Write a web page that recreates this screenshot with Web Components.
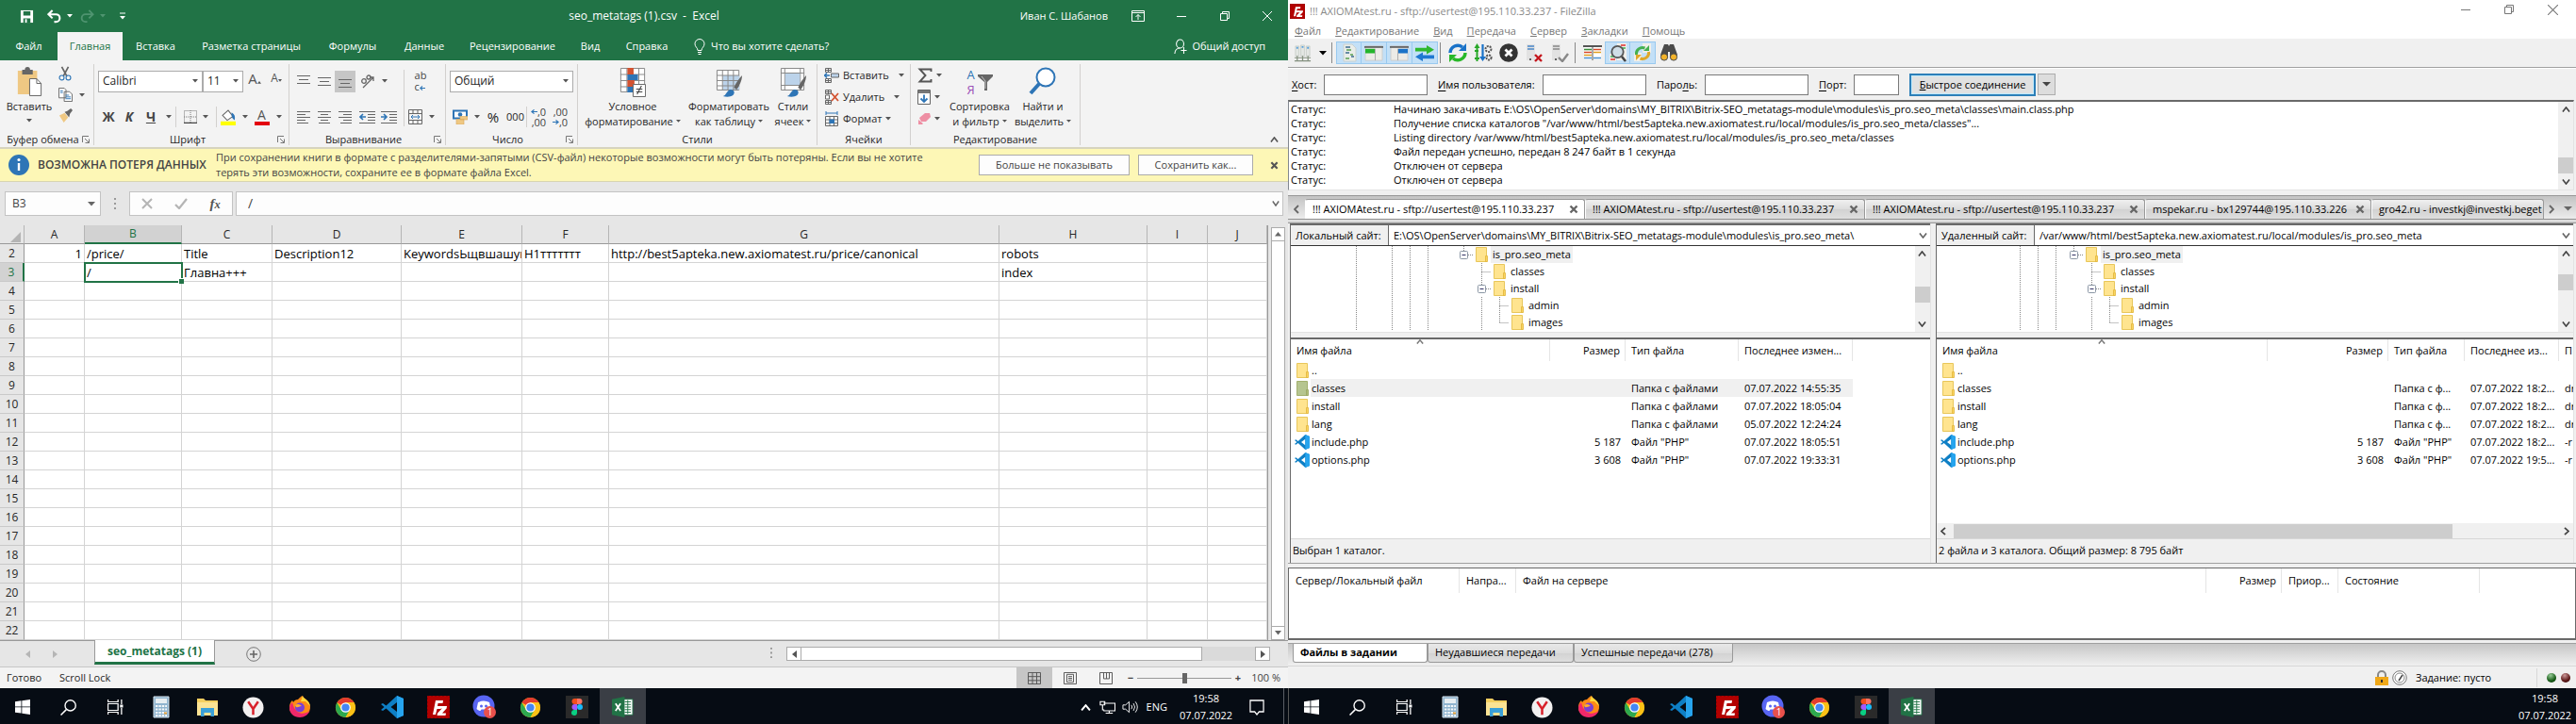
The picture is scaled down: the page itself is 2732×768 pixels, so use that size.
<!DOCTYPE html>
<html lang="ru">
<head>
<meta charset="utf-8">
<title>Рабочий стол</title>
<style>
html,body{margin:0;background:#060c14}
body{font-family:"Open Sans","Noto Sans",sans-serif;font-size:11px;line-height:16px;color:#000;font-variant-ligatures:none}
desk-top{--green:#217346}
</style>
</head>
<body>
<desk-top></desk-top>
<script>
const BASE = `
*{box-sizing:border-box}
:host{display:block}
button,input,select{font:inherit;color:inherit;margin:0;padding:0;border:0;background:none;border-radius:0;min-width:0;outline:0}
select{appearance:none}
button{display:inline-flex;align-items:center;justify-content:center;white-space:nowrap}
a{color:inherit;text-decoration:none}
table{border-collapse:separate;border-spacing:0;table-layout:fixed}
th{font-weight:400}
ui-icon{flex:none}
.grow{flex:1;min-width:0}
`;
function define(name, css, html) {
  customElements.define(name, class extends HTMLElement {
    constructor() {
      super();
      const body = typeof html === 'function' ? html(this) : html;
      this.attachShadow({mode: 'open'}).innerHTML = `<style>${BASE}${css}</style>${body}`;
    }
  });
}

/* ---------- icons ---------- */
const chromeArt = `<circle cx="12" cy="12" r="11" fill="#fbc116"/><path d="M12 12 2.5 6.5A11 11 0 0 1 21.5 6.5L12 6.5z" fill="#e33b2e"/><path d="M2.5 6.5A11 11 0 0 0 12 23l4.8-8.3L7.2 14.7z" fill="#2da94f"/><path d="M12 23A11 11 0 0 0 21.5 6.5H12l4.8 8.2z" fill="#fbc116"/><circle cx="12" cy="12" r="5.6" fill="#fff"/><circle cx="12" cy="12" r="4.3" fill="#4486f4"/>`;
const cells4 = `<path d="M1.5.5h6v4h-6zM1.5 11.5h6v4h-6zM4.5.5v4M4.5 11.5v4M1.5 2.5h6M1.5 13.5h6" fill="none" stroke="#666"/>`;
const ICONS = {
  save:['0 0 16 16','<path d="M1 1h14v14H1z" fill="#fff"/><path d="M4 2h8v5H4zM4 10h8v5H4z" fill="#217346"/><path d="M6 11h2v4H6z" fill="#fff"/>'],
  undo:['0 0 16 16','<path d="M2 5.5h8a4 4 0 0 1 0 8.500H8M6 1 1.500 5.500 6 10" fill="none" stroke="#fff" stroke-width="2.200"/>'],
  redo:['0 0 16 16','<path d="M14 5.500H6A4 4 0 0 0 6 14h2M10 1l4.500 4.500L10 10" fill="none" stroke="#4f9470" stroke-width="2"/>'],
  down:['0 0 8 5','<path d="M0 0h8L4 4.500z" fill="currentColor"/>'],
  up:['0 0 8 5','<path d="M0 4.500h8L4 0z" fill="currentColor"/>'],
  left:['0 0 5 8','<path d="M5 0v8L0 4z" fill="currentColor"/>'],
  right:['0 0 5 8','<path d="M0 0v8l5-4z" fill="currentColor"/>'],
  qat:['0 0 8 8','<path d="M1 1h6" stroke="#fff"/><path d="M1 4h6L4 7.500z" fill="#fff"/>'],
  chevU:['0 0 10 6','<path d="M1 5.500 5 1l4 4.500" fill="none" stroke="currentColor" stroke-width="1.800"/>'],
  chevD:['0 0 10 6','<path d="M1 .5 5 5 9 .5" fill="none" stroke="currentColor" stroke-width="1.800"/>'],
  chevL:['0 0 6 10','<path d="M5 1 1 5l4 4" fill="none" stroke="currentColor" stroke-width="1.800"/>'],
  chevR:['0 0 6 10','<path d="m1 1 4 4-4 4" fill="none" stroke="currentColor" stroke-width="1.800"/>'],
  ribbonOpt:['0 0 14 12','<path d="M.5.5h13v11H.5zM.5 2.500h13M7 10V4.500M4.500 7 7 4.500 9.500 7" fill="none" stroke="#fff"/>'],
  min:['0 0 10 10','<path d="M0 5.500h10" stroke="currentColor"/>'],
  restore:['0 0 10 10','<path d="M.5 2.500h7v7h-7zM2.500 2.500v-2h7v7h-2" fill="none" stroke="currentColor"/>'],
  close:['0 0 10 10','<path d="m0 0 10 10M10 0 0 10" stroke="currentColor"/>'],
  cross:['0 0 10 10','<path d="m1.500 1.500 7 7m0-7-7 7" stroke="currentColor" stroke-width="2.400"/>'],
  bulb:['0 0 12 17','<path d="M4 12.500c0-3-3-3.500-3-7a5 5 0 0 1 10 0c0 3.500-3 4-3 7zM4 14.500h4M4.500 16.500h3" fill="none" stroke="#fff"/>'],
  share:['0 0 16 17','<circle cx="7.500" cy="5.500" r="4.500" fill="none" stroke="#fff" stroke-width="1.200"/><path d="M1 16c.3-4 2-6 6.500-6M12 9v7M8.500 12.500h7" fill="none" stroke="#fff" stroke-width="1.200"/>'],
  paste:['0 0 30 32','<path d="M2 4h22v25H2z" fill="#efc883"/><path d="M7 3h3a3 3 0 0 1 6 0h3v5H7z" fill="#666"/><path d="M15.500 12.500h8l5 5v13h-13z" fill="#fff" stroke="#666"/><path d="M23.500 12.500v5h5" fill="none" stroke="#666"/>'],
  cut:['0 0 16 18','<path d="m4 1 6 11M12 1 6 12" stroke="#666" stroke-width="2"/><circle cx="4" cy="14" r="2.800" fill="none" stroke="#2e75b6" stroke-width="1.300"/><circle cx="12" cy="14" r="2.800" fill="none" stroke="#2e75b6" stroke-width="1.300"/>'],
  copy:['0 0 16 16','<path d="M.5.5h6l2 2v9h-8zM6.500 4.500h6l3 3v8h-9z" fill="#fff" stroke="#666"/><path d="M8 8.500h4M8 10.500h6M8 12.500h6M2 3.500h3M2 5.500h3" stroke="#2e75b6"/>'],
  brush:['0 0 16 16','<path d="m1 8 6-3 4 5-5 6z" fill="#efc883"/><path d="m7 4 3-1 4-3 2 2-3 4-1 4z" fill="#666"/>'],
  border:['0 0 14 14','<path d="M.5.5h13v13H.5zM7 0v14M0 7h14" fill="none" stroke="#777" stroke-dasharray="1 1"/><path d="M0 13.500h14" stroke="#444" stroke-width="1.500"/>'],
  fill:['0 0 16 16','<path d="m2 6 6-5 5 6-6 4z" fill="#fff" stroke="#666"/><path d="M12 4c2 1 3 3 2.500 6-2-1-2.500-3-2.500-6z" fill="#2e75b6" stroke="#2e75b6"/><path d="M0 12h16v4H0z" fill="#ff0"/>'],
  launch:['0 0 8 8','<path d="M7 .5H.5V7M3 3l4 4M7.500 3.500v4h-4" fill="none" stroke="#777"/>'],
  vtop:['0 0 14 16','<path d="M0 2.500h14M2 6.500h10M0 10.500h14" stroke="#666"/>'],
  vmid:['0 0 14 16','<path d="M0 4.500h14M2 8.500h10M0 12.500h14" stroke="#666"/>'],
  vbot:['0 0 14 16','<path d="M0 6.500h14M2 10.500h10M0 14.500h14" stroke="#666"/>'],
  orient:['0 0 16 16','<path d="m3 15 11-11M10 4h4v4" fill="none" stroke="#666" stroke-width="1.300"/><circle cx="4" cy="8" r="2.300" fill="none" stroke="#666" stroke-width="1.300"/><circle cx="9" cy="4" r="2" fill="none" stroke="#666" stroke-width="1.300"/>'],
  al:['0 0 14 14','<path d="M0 1.500h14M0 4.500h9M0 7.500h14M0 10.500h9M0 13.500h12" stroke="#666"/>'],
  ac:['0 0 14 14','<path d="M0 1.500h14M3 4.500h8M0 7.500h14M3 10.500h8M1 13.500h12" stroke="#666"/>'],
  ar:['0 0 14 14','<path d="M0 1.500h14M5 4.500h9M0 7.500h14M5 10.500h9M2 13.500h12" stroke="#666"/>'],
  outdent:['0 0 17 14','<path d="M0 1.500h17M9 4.500h8M9 7.500h8M9 10.500h8M0 13.500h17" stroke="#666"/><path d="M1 7h6M4 4 1 7l3 3" stroke="#2e75b6" stroke-width="1.600" fill="none"/>'],
  indent:['0 0 17 14','<path d="M0 1.500h17M9 4.500h8M9 7.500h8M9 10.500h8M0 13.500h17" stroke="#666"/><path d="M0 7h6M3 4l3 3-3 3" stroke="#2e75b6" stroke-width="1.600" fill="none"/>'],
  merge:['0 0 15 16','<path d="M.5.5h14v15H.5zM.5 4.500h14M.5 11.500h14M5 .5v4M10 .5v4M5 11.500v4M10 11.500v4" fill="none" stroke="#666"/><path d="M3 8h9M5 6 3 8l2 2M10 6l2 2-2 2" fill="none" stroke="#2e75b6"/>'],
  money:['0 0 16 16','<path d="M1 1.500h14v8H1z" fill="#fff" stroke="#2e75b6" stroke-width="2"/><circle cx="8" cy="5.500" r="2.300" fill="#2e75b6"/><path d="M8 7.500h8V11H8zM4 10.500h8V16H4z" fill="#efc883" stroke="#d9a95a" stroke-width=".6"/>'],
  arrL:['0 0 8 6','<path d="M1 3h7M4 .5 1 3l3 2.500" fill="none" stroke="#2e75b6" stroke-width="1.400"/>'],
  arrR:['0 0 8 6','<path d="M0 3h7M4 .5 7 3 4 5.500" fill="none" stroke="#2e75b6" stroke-width="1.400"/>'],
  cond:['0 0 30 32','<path d="M1.500 1.500h27v25h-27zM8.500 1v26M15 1v26M22 1v26M1 8h28M1 14.500h28M1 21h28" fill="#fff" stroke="#888"/><path d="M9 1h7v7H9zM9 14h8v7H9z" fill="#d35230"/><path d="M9 8h12v6H9zM9 21h6v6H9z" fill="#2e75b6"/><path d="M15.500 18.500h14v13h-14z" fill="#fff" stroke="#666"/><path d="M19 23.500h7M19 26.500h7M25 20l-5 9" stroke="#444" stroke-width="1.200"/>'],
  ftable:['0 0 30 32','<path d="M1.500 3.500h24v21h-24z" fill="#fff" stroke="#888"/><path d="M8 9h18v15H8z" fill="#bcd3ea"/><path d="M7.500 3v22M13.500 3v22M19.500 3v22M1 9h25M1 14.500h25M1 20h25" stroke="#888" fill="none"/><path d="M29 9c-3 3-7 8-9 13l3 2c3-4 6-10 6-15z" fill="#666"/><path d="M8 31c4-1 4-6 8-7 4 0 6 3 3 6-3 2-7 2-11 1z" fill="#2e75b6"/>'],
  cstyle:['0 0 30 32','<path d="M1.500 1.500h25v23h-25zM1 6.500h26M1 19.500h26M5.500 1v24M22.500 1v24" fill="#fff" stroke="#888"/><path d="M6 7h16v12H6z" fill="#bcd3ea"/><path d="M29 9c-3 3-7 8-9 13l3 2c3-4 6-10 6-15z" fill="#666"/><path d="M8 31c4-1 4-6 8-7 4 0 6 3 3 6-3 2-7 2-11 1z" fill="#2e75b6"/>'],
  cins:['0 0 16 16',cells4+'<path d="M7.500 6h8v4h-8z" fill="#bcd3ea" stroke="#666"/><path d="M0 8h6M3 5.500.5 8 3 10.500" stroke="#2e75b6" stroke-width="1.500" fill="none"/>'],
  cdel:['0 0 16 16',cells4+'<path d="M1.500 6h4v4h-4z" fill="#fff" stroke="#666"/><path d="m8 4 7 8m0-8-7 8" stroke="#d35230" stroke-width="1.800"/>'],
  cfmt:['0 0 16 16','<path d="M1.500 5.500h13v10h-13zM6 5v11M10.500 5v11M1 9h14M1 12.500h14" fill="#fff" stroke="#666"/><path d="M5.500 8.500h5.500V13H5.500z" fill="#2e75b6"/><path d="M2 0v4M14 0v4M2 2h12" stroke="#2e75b6"/>'],
  sum:['0 0 16 16','<path d="M14.500 4V1.500h-12L8.500 8l-6 6.500h12V12" fill="none" stroke="#555" stroke-width="1.900"/>'],
  fdown:['0 0 14 16','<path d="M.5.5h13v15H.5z" fill="#fff" stroke="#666"/><path d="M1 1h12v3H1z" fill="#777"/><path d="M7 5.500V13M3.500 9.500 7 13l3.500-3.500" fill="none" stroke="#2e75b6" stroke-width="1.800"/>'],
  eraser:['0 0 14 12','<path d="M8 0h5l1 4-5 5H4L2 5z" fill="#ee8fa4"/><path d="m1 7 5 4-1 1H1z" fill="#ee8fa4"/>'],
  funnel:['0 0 16 18','<path d="M0 1h16v2l-6 6v9H7V9L0 3z" fill="#666"/><path d="m4 3 4 5v8" fill="none" stroke="#ddd" stroke-width=".8"/>'],
  find:['0 0 30 32','<circle cx="18" cy="11" r="9.500" fill="#fff" stroke="#2e75b6" stroke-width="2"/><path d="m11 18-9 10" stroke="#2e75b6" stroke-width="4"/>'],
  info:['0 0 22 22','<circle cx="11" cy="11" r="11" fill="#2e75b6"/><circle cx="11" cy="5.500" r="1.600" fill="#fff"/><path d="M11 9v8" stroke="#fff" stroke-width="2.400"/>'],
  dots:['0 0 2 12','<path d="M0 1h2M0 6h2M0 11h2" stroke="#999" stroke-width="2"/>'],
  check:['0 0 14 12','<path d="m1 7 4 4 8-10" fill="none" stroke="#b5b5b5" stroke-width="2.200"/>'],
  xgray:['0 0 12 12','<path d="m1 1 10 10m0-10L1 11" stroke="#b5b5b5" stroke-width="2"/>'],
  corner:['0 0 12 12','<path d="M12 0v12H0z" fill="#b4b4b4"/>'],
  plusc:['0 0 16 16','<circle cx="8" cy="8" r="7.300" fill="none" stroke="#777"/><path d="M4 8h8M8 4v8" stroke="#666" stroke-width="1.600"/>'],
  vgrid:['0 0 14 14','<path d="M.5.5h13v13H.5zM5 0v14M9.500 0v14M0 5h14M0 9.500h14" fill="none" stroke="#555"/>'],
  vpage:['0 0 14 14','<path d="M.5.5h13v13H.5zM3.500 2.500h7v9h-7zM5 5h4M5 7h4M5 9h4" fill="none" stroke="#555"/>'],
  vbreak:['0 0 14 14','<path d="M.5.5h13v13H.5zM4.500.5v7h6v-7M7.500.5v7" fill="none" stroke="#555"/>'],
  /* file manager */
  fz:['0 0 24 24','<path d="M0 0h24v24H0z" fill="#b30000"/><path d="M0 0h24v24H0z" fill="none" stroke="#700" stroke-dasharray="2 2"/><path d="M6 20 9 5h8l-.5 3h-5l-.5 3h4l-.5 3h-4L9 20z" fill="#fff"/><path d="M13 11h8l-.4 2.500-4.600 5h4l-.5 2.500h-9l.5-2.500 4.700-5h-3.200z" fill="#fff"/>'],
  sites:['0 0 20 20','<path d="M2 2h4v11H2zM8 1h4v12H8zM14 2h4v11h-4z" fill="#e4e7e4" stroke="#b5bdb5" stroke-width=".6"/><path d="M3 4h2M9 3h2M15 4h2" stroke="#58a0dc" stroke-width="2"/><path d="M1 15h18M4 13v5M10 13v5M16 13v5M1 18.500h18" stroke="#84907f" stroke-width="1.300"/>'],
  log:['0 0 20 20','<path d="M4 1h9l4 4v14H4z" fill="#e9ede9" stroke="#c9d0d0"/><path d="M6 4h5M6 10h4M12 14h3" stroke="#3c6a90" stroke-width="1.500"/><path d="M7 7h5M11 12h3M6 16h4" stroke="#58a050" stroke-width="1.500"/>'],
  ltree:['0 0 20 18','<path d="M1 1h18v16H1z" fill="#ecebe7" stroke="#ccc"/><path d="M0 1h20v2H0z" fill="#666"/><path d="M1 4h10v5H1z" fill="#24b52c"/><path d="M11.500 4v13" stroke="#aaa"/>'],
  rtree:['0 0 20 18','<path d="M1 1h18v16H1z" fill="#ecebe7" stroke="#ccc"/><path d="M0 1h20v2H0z" fill="#666"/><path d="M9 4h10v5H9z" fill="#1a72c8"/><path d="M8.500 4v13" stroke="#aaa"/>'],
  queue:['0 0 20 18','<path d="M0 3h12V0l8 5-8 5V7H0z" fill="#2fb82f"/><path d="M20 11H8V8l-8 5 8 5v-3h12z" fill="#1f78d1"/>'],
  refresh:['0 0 20 20','<path d="M2 10a8 8 0 0 1 13-6" fill="none" stroke="#1a72c8" stroke-width="3.500"/><path d="M19 0v8h-8z" fill="#1a72c8"/><path d="M18 10a8 8 0 0 1-13 6" fill="none" stroke="#28b828" stroke-width="3.500"/><path d="M1 20v-8h8z" fill="#28b828"/>'],
  process:['0 0 20 20','<path d="M3.500 3v16M1 16h5M1 8h4" stroke="#28a828" stroke-width="2"/><path d="m3.500 0 3 5h-6z" fill="#28a828"/><path d="M9.500 1v14" stroke="#1a72c8" stroke-width="2.200"/><path d="m9.500 19 3.500-5H6z" fill="#1a72c8"/><circle cx="15.500" cy="6" r="3" fill="none" stroke="#555" stroke-width="2" stroke-dasharray="2 1"/><circle cx="16" cy="15" r="2.600" fill="none" stroke="#555" stroke-width="2" stroke-dasharray="2 1"/>'],
  cancel:['0 0 20 20','<circle cx="10" cy="10" r="9.800" fill="#333"/><path d="m6.500 6.500 7 7m0-7-7 7" stroke="#fff" stroke-width="2.800"/>'],
  disc:['0 0 20 20','<path d="M2 1h9v17H2z" fill="#e2e2e2"/><path d="M3 3h7M3 6h7" stroke="#4a86c8" stroke-width="1.600"/><path d="M5 17h2" stroke="#333" stroke-width="1.500"/><path d="m11 12 7 7m0-7-7 7" stroke="#c4161c" stroke-width="2.400"/>'],
  reco:['0 0 20 20','<path d="M2 1h9v17H2z" fill="#e2e2e2"/><path d="M3 3h7M3 6h7" stroke="#888" stroke-width="1.600"/><path d="M5 17h2" stroke="#333" stroke-width="1.500"/><path d="m9 15 4 4 6-8" stroke="#888" stroke-width="2.400" fill="none"/>'],
  cmp:['0 0 20 20','<path d="M1 3h18v14H1z" fill="#fff"/><path d="M0 3h20" stroke="#555" stroke-width="2"/><path d="M1 6.500h8" stroke="#3b8d3b" stroke-width="1.600"/><path d="M1 9.500h8M11 6.500h8" stroke="#d8472b" stroke-width="1.600"/><path d="M1 12.500h8M11 9.500h8" stroke="#e0a020" stroke-width="1.600"/><path d="M1 15.500h8M11 15.500h8" stroke="#4a90d0" stroke-width="1.300"/><path d="M10 3v15" stroke="#555"/>'],
  filter:['0 0 20 20','<path d="M9 0h10v18H9zM1 11h7v8H1z" fill="#f1efe9"/><path d="M13 2h5M2 17h5" stroke="#e03030" stroke-width="1.500"/><path d="M14 5h4M2 14h4" stroke="#3cb050" stroke-width="1.500"/><circle cx="9.500" cy="9" r="6.200" fill="#cfdde6" stroke="#555" stroke-width="1.800"/><path d="m14 14 4 5" stroke="#444" stroke-width="2.600"/>'],
  sync:['0 0 20 20','<path d="M10 0h9v10h-9zM1 10h8v9H1z" fill="#f1efe9"/><path d="M3.500 12a6.500 6.500 0 0 1 9-7" fill="none" stroke="#44b050" stroke-width="3"/><path d="M17 2v6h-6z" fill="#44b050"/><path d="M16.500 9a6.500 6.500 0 0 1-9 7" fill="none" stroke="#e0a828" stroke-width="3"/><path d="M3 18v-6h6z" fill="#e0a828"/>'],
  bino:['0 0 20 20','<path d="M5 1h4l1 2 1-2h4l4 11a5 5 0 0 1-8 3V9H9v6a5 5 0 0 1-8-3z" fill="#4a4a4a"/><circle cx="5" cy="14.500" r="3.600" fill="#f3b32a" stroke="#4a4a4a"/><circle cx="15" cy="14.500" r="3.600" fill="#f3b32a" stroke="#4a4a4a"/>'],
  folder:['0 0 13 16','<path d="M.5.5h11v15H.5z" fill="#ffe48f" stroke="#e8c65a"/><path d="M10.500 9.500h2v6h-2z" fill="#fbd55f" stroke="#dfb43a" stroke-width=".8"/>'],
  folderSel:['0 0 13 16','<path d="M.5.5h11v15H.5z" fill="#b6c590" stroke="#a3b06e"/><path d="M10.500 9.500h2v6h-2z" fill="#aebb78" stroke="#98a462" stroke-width=".8"/>'],
  vscode:['0 0 24 24','<path d="M17 0 5.500 10.500 2 8 0 9l3.500 3L0 15l2 1 3.500-2.500L17 24l7-3V3zm0 7v10l-6.500-5z" fill="#0e7fc5" fill-rule="evenodd"/><path d="m17 0 7 3v18l-7 3z" fill="#26a4ee"/>'],
  lock:['0 0 16 16','<path d="M4 8V5a4 4 0 0 1 8 0v3" fill="none" stroke="#888" stroke-width="2"/><path d="M1 7h14v9H1z" fill="#f0a818"/><path d="M8 10v3" stroke="#333" stroke-width="2"/>'],
  speed:['0 0 16 16','<circle cx="8" cy="8" r="7.300" fill="#fff" stroke="#777"/><circle cx="8" cy="8" r="5" fill="none" stroke="#888"/><path d="m7 11 4-6" stroke="#444" stroke-width="1.500"/>'],
  /* taskbar */
  win:['0 0 16 16','<path d="m0 2.300 6.500-1v6.200H0zM7.300 1.200 16 0v7.500H7.300zM0 8.300h6.500v6.300L0 13.700zM7.300 8.300H16V16l-8.700-1.300z" fill="#fff"/>'],
  search:['0 0 16 16','<circle cx="10" cy="6" r="5.300" fill="none" stroke="#fff" stroke-width="1.300"/><path d="M6 10 .5 15.500" stroke="#fff" stroke-width="1.400"/>'],
  tview:['0 0 16 16','<path d="M.5 4.500h10v7H.5zM.5 0v2.500h10V0M.5 16v-2.500h10V16M14 0v5M14 9v7" fill="none" stroke="#fff" stroke-width="1.200"/><path d="M12.500 5.500h3v3h-3z" fill="#fff"/>'],
  calc:['0 0 18 24','<path d="M1 1h16v22H1z" fill="#8fb4cf" stroke="#d6e4ee"/><path d="M3 3h12v5H3z" fill="#e7eef2"/><path d="M3 11h12M3 14.500h12M3 18h12M3 21h12" stroke="#f4f8fa" stroke-width="2" stroke-dasharray="2.400 1"/><path d="M12 18.500h3" stroke="#e8a640" stroke-width="2"/>'],
  expl:['0 0 22 20','<path d="M0 1h7l2 2h13v16H0z" fill="#f4cf60"/><path d="M0 5h22v14H0z" fill="#fbe394"/><path d="M4 20v-9h14v9h-3.500v-4h-7v4z" fill="#3aa0d8"/>'],
  yandex:['0 0 24 24','<circle cx="12" cy="12" r="11.500" fill="#f2f0f0"/><path d="m6.500 5.500 5.500 8 5.500-8M12 13v7" fill="none" stroke="#d8202a" stroke-width="2.600"/>'],
  firefox:['0 0 24 24','<path d="M12 2c1-1 2-1.500 3-2 0 3 7 4 8 11 .5 7-5 11-11 11S.5 18 1 12c0-3 1-5 3-7l1 2c1-2 3-3 5-3z" fill="#ff8a16"/><path d="M15 0c0 3 7 4 8 11l-5-5-5 0z" fill="#ffd83a"/><path d="M1 13c0 6 5 10 11 10 5 0 9-3 10.500-7-4 3-9 4-13 1S5 10 4 7c-2 2-3 4-3 6z" fill="#f0286a"/><circle cx="12" cy="12.500" r="5" fill="#7a3fd6"/><path d="M7 10c3-2 5-1 7 1-3 0-4 2-6 1z" fill="#ffb02a"/>'],
  chrome:['0 0 24 24',chromeArt],
  discord:['0 0 26 26','<circle cx="12" cy="12" r="11.500" fill="#5865f2"/><path d="M6 8c4-2 8-2 12 0l1.500 7c-1.500 1.500-3 2-4 2l-1-1.500h-5L8.500 17c-1 0-2.500-.5-4-2z" fill="#fff"/><circle cx="9.500" cy="12" r="1.500" fill="#5865f2"/><circle cx="14.500" cy="12" r="1.500" fill="#5865f2"/><circle cx="18.500" cy="18.500" r="6.500" fill="#e8504c"/><text x="18.500" y="22" font-size="10" text-anchor="middle" fill="#fff">1</text>'],
  figma:['0 0 24 24','<path d="M0 0h24v24H0z" fill="#2a2a2a"/><path d="M12 3H9.500a3 3 0 0 0 0 6H12z" fill="#f24e1e"/><path d="M12 3h2.500a3 3 0 0 1 0 6H12z" fill="#ff7262"/><path d="M12 9H9.500a3 3 0 0 0 0 6H12z" fill="#a259ff"/><circle cx="15" cy="12" r="3" fill="#1abcfe"/><path d="M12 15H9.500a3 3 0 1 0 2.500 3z" fill="#0acf83"/>'],
  excel:['0 0 24 24','<path d="M12 3h11v18H12z" fill="#fff" stroke="#217346"/><path d="M14 6h7M14 9h7M14 12h7M14 15h7M14 18h7M17.500 4v16" stroke="#217346"/><path d="M0 3 14 0v24L0 21z" fill="#217346"/><path d="m4 8 5.500 8.500M9.500 8 4 16.500" stroke="#fff" stroke-width="1.900"/>'],
  net:['0 0 18 16','<path d="M4.500 3.500h13v9h-13M11 12.500v3M7 15.500h8M1 1.500h5v4H1zM3.500 5.500v6h2" fill="none" stroke="#fff" stroke-width="1.200"/>'],
  vol:['0 0 18 16','<path d="M1 5.500h3l4-4v13l-4-4H1z" fill="none" stroke="#fff"/><path d="M10.500 5.500q1.500 2.500 0 5M12.800 3.500q3 4.500 0 9M15 1.500q4.500 6.500 0 13" fill="none" stroke="#fff"/>'],
  note:['0 0 17 17','<path d="M1 1h15v12h-5l-2.500 3L6 13H1z" fill="none" stroke="#fff" stroke-width="1.300"/>']
};
class UiIcon extends HTMLElement {
  constructor() {
    super();
    const [box, art] = ICONS[this.getAttribute('name')];
    const w = this.getAttribute('w'), h = this.getAttribute('h') || w;
    this.attachShadow({mode: 'open'}).innerHTML =
      `<style>:host{display:inline-flex}svg{display:block}</style><svg width="${w}" height="${h}" viewBox="${box}" preserveAspectRatio="none" aria-hidden="true">${art}</svg>`;
  }
}
const ic = (name, w, h = w) => `<ui-icon name="${name}" w="${w}" h="${h}"></ui-icon>`;
const caret = ic('down', 6, 4);

/* ---------- Excel ---------- */
define('excel-title', `
:host{display:flex;align-items:center;height:34px;background:var(--green);color:#fff;position:relative}
.qat{display:flex;align-items:center;padding-left:21px}
.undo{margin-left:14px;gap:6px}.redo{margin-left:8px;gap:6px;color:#4f9470}.more{margin-left:14px}
.name{position:absolute;left:0;right:0;text-align:center;font-size:12px}
.right{margin-left:auto;display:flex;align-items:center}
.who{margin-right:25px}
.w{width:46px}
.w:last-child{width:44px}
`, `<div class="name">seo_metatags (1).csv &nbsp;- &nbsp;Excel</div>
<div class="qat"><button aria-label="Сохранить">${ic('save',15)}</button><button class="undo" aria-label="Отменить">${ic('undo',15)}${ic('down',6,4)}</button><button class="redo" aria-label="Вернуть">${ic('redo',15)}${ic('down',6,4)}</button><button class="more" aria-label="Панель">${ic('qat',8)}</button></div>
<div class="right"><span class="who">Иван С. Шабанов</span><button aria-label="Лента">${ic('ribbonOpt',14,12)}</button>
<button class="w" style="margin-left:16px" aria-label="Свернуть">${ic('min',10)}</button><button class="w" aria-label="Восстановить">${ic('restore',10)}</button><button class="w" aria-label="Закрыть">${ic('close',10)}</button></div>`);

define('excel-tabs', `
:host{display:flex;height:30px;background:var(--green);color:#fff}
button.on{background:#f3f3f3;color:var(--green)}
.tell{gap:6px;margin-left:14px}
.share{gap:5px;margin-left:auto;padding-right:24px}
`, [['Файл',61],['Главная',69],['Вставка',70],['Разметка страницы',133],['Формулы',82],['Данные',70],['Рецензирование',117],['Вид',48],['Справка',72]]
  .map(([t, w]) => `<button class="${t === 'Главная' ? 'on' : ''}" style="width:${w}px">${t}</button>`).join('') +
  `<button class="tell">${ic('bulb',12,17)}Что вы хотите сделать?</button><button class="share">${ic('share',14,17)}Общий доступ</button>`);

define('ribbon-group', `
:host{display:flex;flex-direction:column;border-right:1px solid #d2d0ce;height:86px;color:#262626}
.b{height:73px;display:flex}
.l{display:flex;align-items:center;height:13px;padding:0 4px 0 4px}
.l span{flex:1;text-align:center;white-space:nowrap}
`, el => `<div class="b"><slot></slot></div><div class="l"><span>${el.getAttribute('label')}</span>${el.hasAttribute('launch') ? ic('launch',8) : ''}</div>`);

define('excel-ribbon', `
:host{display:flex;background:#f3f3f3;height:94px;padding-top:4px;border-bottom:2px solid #d6d4bd;color:#262626}
ui-icon{color:#555}
.col{display:flex;flex-direction:column}
.row{display:flex;align-items:center;height:23px;gap:4px;justify-content:flex-start}
.row span{padding-right:6px}
.big{display:flex;flex-direction:column;align-items:center;justify-content:flex-start;line-height:16px;padding-top:3px}
.big span{display:flex;align-items:center;gap:3px;height:16px}
.big ui-icon:first-child{margin-bottom:2px}
.box{display:flex;align-items:center;background:#fff;border:1px solid #ababab;height:23px;padding:0 4px}
.box select{flex:1;width:100%;height:20px;font-size:12px}
.rows{display:flex;flex-direction:column;justify-content:space-between;padding:6px 0 5px 4px;width:100%}
.g,.sm{display:flex;align-items:center}
.g{height:24px}
.g button{height:23px;gap:7px}
.sep{width:1px;height:22px;background:#d2d0ce}
.on{background:#c6c6c6}
b,i,u{font-size:14px;color:#444}
u{font-weight:700}
.num{font-size:11px;line-height:11px;color:#444;display:flex;flex-direction:column;align-items:flex-end}
.num span{display:flex;align-items:center}
.ab{font-size:11px;line-height:12px;color:#444;display:flex;flex-direction:column;align-items:flex-start}
.A{font-size:15px;color:#555;align-items:flex-start}
.A.s{font-size:12px}
.up{color:#2e75b6;align-self:flex-start}
.fc{display:flex;flex-direction:column;align-items:center;width:16px;font-size:14px;line-height:14px;color:#555;border-bottom:4px solid #e3000f}
.sort{display:flex;gap:2px;align-items:center;margin-bottom:2px}
.big .sort{height:32px}
.sort div{display:flex;flex-direction:column;line-height:16px;font-size:13px;color:#2e75b6}
.sort em{font-style:normal;color:#9a4fb8}
.collapse{margin-left:auto;align-self:flex-end;padding:0 10px 5px 0}
`, `
<ribbon-group label="Буфер обмена" launch style="width:100px">
  <button class="big" style="width:62px">${ic('paste',28,32)}<span>Вставить</span><span>${caret}</span></button>
  <div class="col" style="gap:7px;padding-top:2px"><button style="justify-content:flex-start">${ic('cut',14,16)}</button><button style="gap:7px">${ic('copy',15,15)}${caret}</button><button style="justify-content:flex-start">${ic('brush',15,15)}</button></div>
</ribbon-group>
<ribbon-group label="Шрифт" launch style="width:207px">
  <div class="rows">
    <div class="g"><label class="box" style="width:111px"><select aria-label="Шрифт"><option>Calibri</option></select>${caret}</label><label class="box" style="width:43px"><select aria-label="Размер"><option>11</option></select>${caret}</label>
      <button class="A" style="width:24px;gap:0">A<span class="up">${ic('up',4,3)}</span></button><button class="A s" style="width:22px;gap:0">A<span class="up">${ic('down',4,3)}</span></button></div>
    <div class="g"><button style="width:22px"><b>Ж</b></button><button style="width:22px"><i><b>К</b></i></button><button style="width:24px"><u>Ч</u></button><button style="width:14px">${caret}</button><span class="sep"></span>
      <button style="width:42px;gap:6px">${ic('border',14)}${caret}</button><span class="sep"></span><button style="width:37px">${ic('fill',16,17)}${caret}</button><button style="width:34px"><span class="fc">A</span>${caret}</button></div>
  </div>
</ribbon-group>
<ribbon-group label="Выравнивание" launch style="width:166px">
  <div class="rows" style="width:121px">
    <div class="g"><button style="width:22px">${ic('vtop',14,16)}</button><button style="width:22px">${ic('vmid',14,16)}</button><button class="on" style="width:22px">${ic('vbot',14,16)}</button><button style="width:38px">${ic('orient',16)}${caret}</button></div>
    <div class="g"><button style="width:22px">${ic('al',14)}</button><button style="width:22px">${ic('ac',14)}</button><button style="width:22px">${ic('ar',14)}</button><button style="width:24px">${ic('outdent',17,14)}</button><button style="width:22px">${ic('indent',17,14)}</button></div>
  </div>
  <span class="sep" style="height:60px;margin-top:6px"></span>
  <div class="rows" style="width:43px"><div class="g"><button style="width:26px"><span class="ab"><span>ab</span><span>c${ic('arrL',6,5)}</span></span></button></div><div class="g"><button>${ic('merge',15,16)}${caret}</button></div></div>
</ribbon-group>
<ribbon-group label="Число" launch style="width:140px">
  <div class="rows">
    <div class="g"><label class="box" style="width:131px"><select aria-label="Числовой формат"><option>Общий</option></select>${caret}</label></div>
    <div class="g"><button style="width:34px">${ic('money',16)}${caret}</button><button style="width:24px;font-size:15px">%</button><button style="width:23px">000</button><span class="sep"></span>
    <button style="width:24px"><span class="num"><span>${ic('arrL',7,5)},0</span><span>,00</span></span></button><button style="width:22px"><span class="num"><span>,00</span><span>${ic('arrR',7,5)},0</span></span></button></div>
  </div>
</ribbon-group>
<ribbon-group label="Стили" style="width:254px">
  <button class="big" style="width:116px">${ic('cond',28,32)}<span>Условное</span><span>форматирование ${ic('down',5,3)}</span></button>
  <button class="big" style="width:88px">${ic('ftable',29,32)}<span>Форматировать</span><span>как таблицу ${ic('down',5,3)}</span></button>
  <button class="big" style="width:48px">${ic('cstyle',29,32)}<span>Стили</span><span>ячеек ${ic('down',5,3)}</span></button>
</ribbon-group>
<ribbon-group label="Ячейки" style="width:99px">
  <div class="col" style="padding-left:7px">
    <button class="row">${ic('cins',16)}<span>Вставить</span>${caret}</button>
    <button class="row">${ic('cdel',16)}<span>Удалить</span>${caret}</button>
    <button class="row">${ic('cfmt',16)}Формат${caret}</button>
  </div>
</ribbon-group>
<ribbon-group label="Редактирование" style="width:180px">
  <div class="col" style="padding-left:7px;width:39px"><button class="row">${ic('sum',16)}${caret}</button><button class="row">${ic('fdown',14,16)}${caret}</button><button class="row">${ic('eraser',14,12)}${caret}</button></div>
  <button class="big" style="width:68px"><span class="sort"><div>А<em>Я</em></div>${ic('funnel',16,18)}</span><span>Сортировка</span><span>и фильтр ${ic('down',5,3)}</span></button>
  <button class="big" style="width:66px">${ic('find',30,32)}<span>Найти и</span><span>выделить ${ic('down',5,3)}</span></button>
</ribbon-group>
<button class="collapse" aria-label="Свернуть ленту">${ic('chevU',9,6)}</button>`);

define('message-bar', `
:host{display:flex;align-items:center;height:35px;background:#fdf7b6;border-bottom:1px solid #d8d5b0;padding-left:9px;color:#444}
b{margin-left:9px;width:189px;white-space:nowrap;font-weight:600;font-size:12px}
p{margin:0;flex:1;white-space:nowrap}
.btns{display:flex;margin-left:auto;gap:9px;align-items:center}
.btns button{height:22px;background:#fdfdfd;border:1px solid #ababab}
.btns .x{border:0;background:none;width:10px;margin:0 10px 0 8px;color:#555}
`, `${ic('info',22)}<b>ВОЗМОЖНА ПОТЕРЯ ДАННЫХ</b><p>При сохранении книги в формате с разделителями-запятыми (CSV-файл) некоторые возможности могут быть потеряны. Если вы не хотите<br>терять эти возможности, сохраните ее в формате файла Excel.</p>
<div class="btns"><button style="width:160px">Больше не показывать</button><button style="width:122px">Сохранить как...</button><button class="x" aria-label="Закрыть">${ic('cross',9)}</button></div>`);

define('formula-bar', `
:host{display:flex;align-items:center;height:46px;padding:0 5px 0 5px;background:#e6e6e6}
.box{display:flex;align-items:center;height:26px;background:#fdfdfd;border:1px solid #c3c3c3;color:#444;font-size:12px}
.n{width:102px;padding:0 5px 0 7px}.n input{width:100%}
ui-icon{color:#666}
.d{width:30px;text-align:center;display:flex;justify-content:center}
.f{width:110px;margin-right:3px}.f button{flex:1}
.f i{font:italic 700 15px "Liberation Serif",serif;color:#555}
.v{flex:1;padding:0 3px 0 12px;font-size:14px}.v input{flex:1}
`, `<label class="box n"><input value="B3" aria-label="Имя">${ic('down',8,5)}</label><span class="d">${ic('dots',2,12)}</span>
<div class="box f"><button aria-label="Отмена">${ic('xgray',12)}</button><button aria-label="Ввод">${ic('check',14,12)}</button><button aria-label="Функция"><i>f<small>x</small></i></button></div>
<label class="box v"><input value="/" aria-label="Формула">${ic('chevD',8,6)}</label>`);

const COLS = {A:64,B:103,C:96,D:137,E:128,F:92,G:414,H:157,I:64,J:''};
const CELLS = {A2:'1',B2:'/price/',C2:'Title',D2:'Description12',E2:'KeywordsЬщвшашун',F2:'Н1ттттттт',G2:'http://best5apteka.new.axiomatest.ru/price/canonical',H2:'robots',B3:'/',C3:'Главна+++',H3:'index'};
const rowHtml = r => `<tr><th class="${r === 3 ? 'on' : ''}">${r}</th>${Object.keys(COLS).map(c => `<td class="${c + r === 'B3' ? 'sel' : c === 'A' ? 'n' : ''}">${CELLS[c + r] || ''}</td>`).join('')}</tr>`;
define('sheet-grid', `
:host{display:flex;background:#e6e6e6;border-bottom:1px solid #999}
table{width:100%;background:#fff;border-right:1px solid #999}
th,td{height:20px;padding:0;overflow:hidden;white-space:nowrap;font-size:12px}
td{font-size:13px}
thead th{background:#e6e6e6;border-right:1px solid #b5b5b5;border-bottom:1px solid #999;color:#262626}
thead th.on{background:#d2d2d2;color:var(--green);border-bottom:2px solid var(--green)}
thead th:first-child ui-icon{float:right;margin:5px 3px 0 0}
tbody th{background:#e6e6e6;border-right:1px solid #999;border-bottom:1px solid #c9c9c9;color:#262626}
tbody th.on{background:#d2d2d2;color:var(--green);border-right:2px solid var(--green)}
td{border-right:1px solid #d4d4d4;border-bottom:1px solid #d4d4d4;padding:0 2px}
td.n{text-align:right}
td.sel{outline:2px solid var(--green);outline-offset:-1px;overflow:visible;position:relative}
td.sel::after{content:"";position:absolute;right:-3px;bottom:-3px;width:5px;height:5px;background:var(--green);border:1px solid #fff;border-width:1px 0 0 1px}
.sb{width:15px;flex:none;margin:2px 3px 0 3px;display:flex;flex-direction:column}
.sb span{border:1px solid #ababab;background:#fff;height:15px;display:flex;align-items:center;justify-content:center;color:#666}
.sb .t{flex:1;border-top:0;border-bottom:0}
`, `<table><colgroup><col style="width:26px">${Object.values(COLS).map(w => `<col${w ? ` style="width:${w}px"` : ''}>`).join('')}</colgroup>
<thead><tr><th>${ic('corner',11)}</th>${Object.keys(COLS).map(c => `<th class="${c === 'B' ? 'on' : ''}">${c}</th>`).join('')}</tr></thead>
<tbody>${Array.from({length: 21}, (_, i) => rowHtml(i + 2)).join('')}</tbody></table>
<div class="sb"><span>${ic('up',7,5)}</span><span class="t"></span><span>${ic('down',7,5)}</span></div>`);

define('sheet-tabs', `
:host{display:flex;height:28px;background:#e6e6e6;border-bottom:1px solid #c6c6c6;align-items:center}
.nav{width:100px;display:flex;gap:24px;padding-left:27px;color:#b5b5b5}
.tab{width:128px;height:26px;align-self:flex-start;margin-top:-1px;background:#fff;border:1px solid #999;border-top:0;border-bottom:3px solid var(--green);color:var(--green);font-weight:700;font-size:12px}
.add{margin-left:33px}
.right{margin-left:auto;display:flex;align-items:center;padding-right:19px}
.s{border:1px solid #ababab;background:#fff;height:15px;width:16px;display:flex;align-items:center;justify-content:center;color:#555}
.t{width:425px;border-left:0}.tr{width:56px;height:15px;background:#dadada}
.d{margin-right:15px}
`, `<div class="nav">${ic('left',5,8)}${ic('right',5,8)}</div><button class="tab">seo_metatags (1)</button><button class="add" aria-label="Новый лист">${ic('plusc',16)}</button>
<div class="right"><span class="d">${ic('dots',2,11)}</span><span class="s">${ic('left',5,8)}</span><span class="s t"></span><span class="tr"></span><span class="s">${ic('right',5,8)}</span></div>`);

define('excel-status', `
:host{display:flex;height:22px;background:#f3f3f3;align-items:center;padding:0 8px 0 7px;color:#262626}
.r{margin-left:auto;display:flex;align-items:center;color:#444}
.r button{width:38px;height:22px}.on{background:#c6c6c6}
input{appearance:none;width:100px;height:12px;background:linear-gradient(#999,#999) center/100% 1px no-repeat}
input::-webkit-slider-thumb{appearance:none;width:5px;height:11px;background:#666}
b{width:14px;text-align:center}.z{width:38px;text-align:right;white-space:nowrap}
`, `<span style="width:56px">Готово</span><span>Scroll Lock</span><div class="r"><button class="on" aria-label="Обычный">${ic('vgrid',14,13)}</button><button aria-label="Разметка">${ic('vpage',14,13)}</button><button aria-label="Страничный">${ic('vbreak',14,13)}</button>
<b>−</b><input type="range" value="51" aria-label="Масштаб"><b>+</b><span class="z">100 %</span></div>`);

define('excel-window', `:host{display:flex;flex-direction:column;background:#e6e6e6;min-width:0}`,
`<excel-title></excel-title><excel-tabs></excel-tabs><excel-ribbon></excel-ribbon><message-bar></message-bar><formula-bar></formula-bar><sheet-grid></sheet-grid><sheet-tabs></sheet-tabs><excel-status></excel-status>`);

/* ---------- FileZilla ---------- */
define('fz-title', `
:host{display:flex;align-items:center;height:24px;background:#fff;color:#8a8a8a;padding-left:2px}
span{margin-left:5px;flex:1}
button{width:46px;height:20px;margin-bottom:4px;color:#777}
button:last-child{margin-right:2px}
`, `${ic('fz',16)}<span>!!! AXIOMAtest.ru - sftp://usertest@195.110.33.237 - FileZilla</span><button aria-label="Свернуть">${ic('min',10)}</button><button aria-label="Развернуть">${ic('restore',10)}</button><button aria-label="Закрыть">${ic('close',11)}</button>`);

define('fz-menu', `
:host{display:flex;gap:15px;height:17px;background:#fff;color:#777;padding-left:7px;line-height:17px}
a::first-letter{text-decoration:underline}
a{display:block}
`, ['Файл','Редактирование','Вид','Передача','Сервер','Закладки','Помощь'].map(t => `<a href="#">${t}</a>`).join(''));

define('fz-toolbar', `
:host{display:flex;align-items:center;height:31px;background:#f0f0f0;border-bottom:1px solid #a0a0a0;padding-left:6px}
button{width:27px;height:24px}
.on{background:#c3e0f7;border:1px solid #99c9ef}
.on+.on{border-left:0}
.s{width:1px;height:22px;background:#888;margin:0 4px 0 3px}
.first{gap:8px;width:35px;margin-right:2px}
`, `<button class="first" aria-label="Менеджер сайтов">${ic('sites',19)}${ic('down',8,5)}</button><span class="s"></span>
${['log','ltree','rtree','queue'].map(n => `<button class="on" aria-label="${n}">${ic(n,20,n === 'log' ? 20 : 17)}</button>`).join('')}<span class="s" style="margin:0 4px 0 2px"></span>
${['refresh','process','cancel','disc','reco'].map(n => `<button aria-label="${n}">${ic(n,20)}</button>`).join('')}<span class="s"></span><button>${ic('cmp',20)}</button><button class="on">${ic('filter',20)}</button><button class="on">${ic('sync',20)}</button><button>${ic('bino',20)}</button>`);

define('quick-connect', `
:host{display:flex;align-items:center;height:34px;background:#f0f0f0;padding-left:4px;border-top:1px solid #fff}
label{white-space:nowrap}
label u{text-underline-offset:2px}
input{height:22px;width:110px;margin-right:11px;background:#fff;border:1px solid #7a7a7a;padding:0 4px}
.go{width:134px;height:24px;border:2px solid #2d7fb8;background:#e1e1e1;box-shadow:inset 0 0 0 1px #bfeafc}
.dd{width:19px;height:23px;margin-left:2px;background:#ddd;border:1px solid #adadad;color:#444}
`, `<label for="h" style="width:34px"><u>Х</u>ост:</label><input id="h"><label for="u" style="width:111px"><u>И</u>мя пользователя:</label><input id="u"><label for="p" style="width:51px">Паро<u>л</u>ь:</label><input id="p" type="password"><label for="q" style="width:37px"><u>П</u>орт:</label><input id="q" style="width:48px"><button class="go"><span><u>Б</u>ыстрое соединение</span></button><button class="dd" aria-label="История">${ic('down',9,5)}</button>`);

define('scroll-bar', `
:host{display:flex;flex-direction:column;width:16px;flex:none;background:#f0f0f0;color:#444;align-items:center;padding:5px 0}
i{flex:1}.t{width:16px;height:17px;background:#cdcdcd}
`, el => `${ic('chevU',9,6)}<i style="flex:${el.getAttribute('a')}"></i><span class="t"></span><i style="flex:${el.getAttribute('b')}"></i>${ic('chevD',9,6)}`);

const LOG = ['Начинаю закачивать E:\\OS\\OpenServer\\domains\\MY_BITRIX\\Bitrix-SEO_metatags-module\\modules\\is_pro.seo_meta\\classes\\main.class.php','Получение списка каталогов "/var/www/html/best5apteka.new.axiomatest.ru/local/modules/is_pro.seo_meta/classes"...','Listing directory /var/www/html/best5apteka.new.axiomatest.ru/local/modules/is_pro.seo_meta/classes','Файл передан успешно, передан 8 247 байт в 1 секунда','Отключен от сервера','Отключен от сервера'];
define('message-log', `
:host{display:flex;height:96px;background:#fff;border:1px solid #828790;border-top:2px solid #696969;border-right-color:#e3e3e3;border-bottom-color:#e3e3e3;margin-right:2px}
table{width:100%}
td{padding:0 0 0 2px;height:15px;line-height:15px;white-space:nowrap}
`, `<div class="grow"><table><colgroup><col style="width:109px"><col></colgroup>${LOG.map(t => `<tr><td>Статус:</td><td>${t}</td></tr>`).join('')}</table></div><scroll-bar a="42" b="5"></scroll-bar>`);

define('site-tabs', `
:host{display:flex;align-items:flex-end;height:30px;margin-top:5px;background:linear-gradient(#c3c3c3,#ececec 24px,#8f8f8f 24px,#8f8f8f 25px,#e6e6e6 25px,#d0d0d0 28px,#999 28px);border-top:1px solid #999;padding:3px 0 5px}
.nav{width:18px;align-self:center;color:#888}
.tab{display:flex;align-items:center;justify-content:space-between;width:297px;height:21px;padding:0 6px 0 7px;background:linear-gradient(#f0f0f0,#dcdcdc 50%,#d2d2d2 50%,#dedede);border:1px solid #999;border-left-color:#fff;border-bottom:0;border-radius:3px 3px 0 0;white-space:nowrap;overflow:hidden}
.tab.on{background:#fff}
ui-icon{color:#666}
`, `<button class="nav" aria-label="Назад">${ic('chevL',6,10)}</button>
${['on','',''].map(c => `<div class="tab ${c}">!!! AXIOMAtest.ru - sftp://usertest@195.110.33.237${ic('cross',10)}</div>`).join('')}<div class="tab" style="width:240px">mspekar.ru - bx129744@195.110.33.226${ic('cross',10)}</div><div class="tab grow">gro42.ru - investkj@investkj.beget</div>
<button class="nav" style="width:16px" aria-label="Вперед">${ic('chevR',6,10)}</button><button class="nav" aria-label="Список">${ic('down',9,5)}</button>`);

/* tree guides: | vertical line, T branch, L last branch, m collapse box */
const G = 'stroke="#888" stroke-dasharray="1 1" fill="none"';
const TREECELL = {
  ' ':'', '|':`<path d="M9.500 0v18" ${G}/>`, 'T':`<path d="M9.500 0v18M9.500 9.500h10" ${G}/>`, 'L':`<path d="M9.500 0v10M9.500 9.500h10" ${G}/>`,
  'm':`<path d="M9.500 0v5M14 9.500h5" ${G}/><rect x="5.500" y="5.500" width="8" height="8" rx="1" fill="#fff" stroke="#8b97a5"/><path d="M7.500 9.500h4" stroke="#336"/>`
};
define('folder-tree', `
:host{display:flex;height:92px;background:#fff}
ul{list-style:none;margin:0;padding:0 0 0 3px}
li{display:flex;align-items:center;height:18px}
svg{flex:none}
li ui-icon{width:19px;justify-content:center}
span{padding:0 2px 0 2px;height:18px;line-height:17px}
.s{background:#f0f0f0}
`, el => {
  const lines = el.getAttribute('lines');
  const rows = [['m','is_pro.seo_meta'],[' T','classes'],[' m','install'],[' |T','admin'],[' |L','images']];
  return `<ul class="grow">${rows.map(([c, t], i) => `<li>${[...(lines + c)].map(k => `<svg width="19" height="18">${TREECELL[k]}</svg>`).join('')}${ic('folder',13,16)}<span class="${i ? '' : 's'}">${t}</span></li>`).join('')}</ul><scroll-bar a="${el.getAttribute('a')}" b="${el.getAttribute('b')}"></scroll-bar>`;
});

define('file-list', `
:host{display:block;background:#fff;border-top:2px solid #696969;overflow:hidden}
table{width:100%}
th{height:23px;text-align:left;border-right:1px solid #e5e5e5;padding:0 0 0 6px;white-space:nowrap;overflow:hidden}
th:first-child{position:relative}
th ui-icon{position:absolute;top:0;left:calc(50% - 4px);color:#777}
td{height:19px;padding:0 0 0 6px;white-space:nowrap;overflow:hidden}
.r{text-align:right;padding:0 5px 0 0}
.n{display:flex;align-items:center;height:19px}
.n ui-icon{width:16px}
.n.v{margin-left:-2px}.n.v ui-icon{width:18px}
.n span{flex:1;line-height:19px}
.sel td{background:#f0f0f0}.sel td:first-child{background:linear-gradient(90deg,#fff 21px,#f0f0f0 21px)}
.sel td:last-child{background:none}
`, el => {
  const remote = el.hasAttribute('remote');
  const w = remote ? ['',128,81,100,15] : [275,80,120,121,''];
  const T = (a, b) => remote ? b : a;
  const folder = T('Папка с файлами','Папка с ф...');
  const rows = [['..','','','',''],['classes','',folder,T('07.07.2022 14:55:35','07.07.2022 18:2...'),'dr'],['install','',folder,T('07.07.2022 18:05:04','07.07.2022 18:2...'),'dr'],['lang','',folder,T('05.07.2022 12:24:24','07.07.2022 18:2...'),'dr'],['include.php','5 187','Файл "PHP"',T('07.07.2022 18:05:51','07.07.2022 18:2...'),'-r'],['options.php','3 608','Файл "PHP"',T('07.07.2022 19:33:31','07.07.2022 19:5...'),'-r']];
  return `<table><colgroup>${w.map(x => `<col${x ? ` style="width:${x}px"` : ''}>`).join('')}</colgroup>
<thead><tr><th>${ic('chevU',8,5)}Имя файла</th><th class="r">Размер</th><th>Тип файла</th><th>${T('Последнее измен...','Последнее из...')}</th><th style="border:0">${T('','П')}</th></tr></thead>
<tbody>${rows.map(([n, s, t, d, p]) => { const sel = !remote && n === 'classes', php = n.endsWith('php');
    return `<tr class="${sel ? 'sel' : ''}"><td><div class="n ${php ? 'v' : ''}">${php ? ic('vscode',16) : ic(sel ? 'folderSel' : 'folder',13,16)}<span>${n}</span></div></td><td class="r">${s}</td><td>${t}</td><td>${d}</td><td>${remote ? p : ''}</td></tr>`; }).join('')}</tbody></table>`;
});

define('site-pane', `
:host{display:flex;flex-direction:column;min-width:0;border-left:1px solid #696969;border-right:1px solid #e3e3e3;background:#f0f0f0}
.path{display:flex;height:24px;border-top:2px solid #696969;border-bottom:1px solid #333}
.path label{width:104px;padding-left:5px;line-height:21px;background:#f0f0f0;border-right:1px solid #696969;white-space:nowrap}
.combo{flex:1;display:flex;align-items:center;background:#fff;padding:0 3px 0 5px;color:#000}
.combo select{flex:1}
.combo ui-icon{color:#666}
folder-tree{border-bottom:1px solid #e3e3e3}
.gap{height:5px}
.list{flex:1;display:flex;flex-direction:column;background:#fff}
.h{margin-top:auto;height:16px;background:#f0f0f0;display:flex;align-items:center;padding:0 4px 0 4px;color:#444}
.h span{flex:1;margin:0 118px 0 8px;height:15px;background:#cdcdcd}
.st{height:26px;border-top:1px solid #d7d7d7;padding-left:2px;line-height:24px}
`, el => { const r = el.hasAttribute('remote'); return `
<div class="path"><label for="p">${r ? 'Удаленный сайт:' : 'Локальный сайт:'}</label><div class="combo"><select id="p"><option>${r ? '/var/www/html/best5apteka.new.axiomatest.ru/local/modules/is_pro.seo_meta' : 'E:\\OS\\OpenServer\\domains\\MY_BITRIX\\Bitrix-SEO_metatags-module\\modules\\is_pro.seo_meta\\'}</option></select>${ic('chevD',9,6)}</div></div>
<folder-tree lines="${r ? '    |||' : '   | ||| '}" a="${r ? 17 : 28}" b="${r ? 29 : 18}"></folder-tree><div class="gap"></div>
<div class="list"><file-list ${r ? 'remote' : ''}></file-list>${r ? `<div class="h">${ic('chevL',6,9)}<span></span>${ic('chevR',6,9)}</div>` : ''}</div>
<div class="st">${r ? '2 файла и 3 каталога. Общий размер: 8 795 байт' : 'Выбран 1 каталог.'}</div>`; });

define('transfer-queue', `
:host{display:flex;flex-direction:column;background:#f0f0f0;padding-top:4px;border-top:1px solid #a0a0a0}
.q{height:77px;background:#fff;border:1px solid #696969;border-bottom-width:2px}
table{width:100%}
th{height:26px;text-align:left;padding:0 0 0 7px;border-right:1px solid #e5e5e5;white-space:nowrap}
th.r{text-align:right;padding:0 5px 0 0}
.tabs{display:flex;height:25px;margin-top:3px;padding-left:5px;background:linear-gradient(#c6c6c6,#f0f0f0);border-top:1px solid #a0a0a0;border-bottom:1px solid #d7d7d7}
.tabs button{height:20px;justify-content:flex-start;padding:0 0 2px 7px;background:linear-gradient(#e8e8e8,#dcdcdc 50%,#d2d2d2 50%,#dedede);border:1px solid #999;border-top:0;border-radius:0 0 3px 3px}
.tabs .on{background:#fff;font-weight:700}
`, `<div class="q"><table><colgroup><col style="width:181px"><col style="width:60px"><col><col style="width:80px"><col style="width:60px"><col style="width:150px"><col style="width:101px"></colgroup>
<thead><tr><th>Сервер/Локальный файл</th><th>Напра...</th><th>Файл на сервере</th><th class="r">Размер</th><th>Приор...</th><th>Состояние</th><th style="border:0"></th></tr></thead></table></div>
<div class="tabs"><button class="on" style="width:143px">Файлы в задании</button><button style="width:155px">Неудавшиеся передачи</button><button style="width:169px">Успешные передачи (278)</button></div>`);

define('fz-status', `
:host{display:flex;align-items:center;justify-content:flex-end;height:23px;background:#f0f0f0;padding-right:6px}
span{width:128px;margin-left:9px}
i{width:10px;height:10px;border-radius:50%;margin-left:5px}
.sep{width:1px;height:20px;background:#d7d7d7;margin-right:5px}
`, `${ic('lock',16)}<ui-icon name="speed" w="16" h="16" style="margin-left:3px"></ui-icon><span>Задание: пусто</span><b class="sep"></b><i style="background:radial-gradient(circle at 40% 25%,#9c9,#185c18 60%,#062a06)"></i><i style="background:radial-gradient(circle at 40% 25%,#c99,#5c1818 60%,#2a0606)"></i>`);

define('filezilla-window', `
:host{display:flex;flex-direction:column;background:#f0f0f0;min-width:0}
.panes{flex:1;display:grid;grid-template-columns:681fr 678fr;gap:5px;padding:0 2px 0 2px}
`, `<fz-title></fz-title><fz-menu></fz-menu><fz-toolbar></fz-toolbar><quick-connect></quick-connect><message-log></message-log><site-tabs></site-tabs>
<div class="panes"><site-pane></site-pane><site-pane remote></site-pane></div><transfer-queue></transfer-queue><fz-status></fz-status>`);

/* ---------- taskbar ---------- */
const APPS = [['calc',18,24,1],['expl',22,20,2],['yandex',23,23,0],['firefox',24,24,1],['chrome',23,23,1],['vscode',24,24,2],['fz',24,24,1],['discord',26,26,1],['chrome',23,23,1],['figma',24,24,1],['excel',23,22,3]];
define('task-bar', `
:host{display:flex;height:40px;background:#060c14;color:#fff;align-items:stretch;min-width:0}
.s{width:48px}.s:nth-child(3){margin-right:2px}
.a{width:49px;position:relative;padding:0 4px}
.a::after{position:absolute;left:5px;right:4px;bottom:0;height:2px;background:#76b9ed}
.u1::after,.u2::after,.u3::after{content:""}
.u2::after{background:linear-gradient(90deg,#76b9ed 31px,#48739a 31px)}
.u3{background:#3a3e45}.u3::after{left:0;right:0}
.tray{margin-left:auto;display:flex;align-items:center}
time{text-align:center;line-height:18px;width:66px}
`, el => `<button class="s" aria-label="Пуск">${ic('win',16)}</button><button class="s" aria-label="Поиск">${ic('search',17)}</button><button class="s" aria-label="Представление задач">${ic('tview',17,16)}</button>
${APPS.map(([n, w, h, u]) => `<button class="a u${u}" aria-label="${n}">${ic(n,w,h)}</button>`).join('')}
<div class="tray">${el.hasAttribute('main') ? `${ic('chevU',11,7)}<ui-icon name="net" w="17" h="14" style="margin-left:9px"></ui-icon><ui-icon name="vol" w="17" h="14" style="margin-left:7px"></ui-icon><span style="margin:0 8px 0 9px">ENG</span>` : ''}<time>19:58<br>07.07.2022</time>${el.hasAttribute('main') ? `<ui-icon name="note" w="16" h="17" style="margin:0 20px 0 13px"></ui-icon><span style="width:1px;height:40px;background:#5a5f66;margin-right:4px"></span>` : ''}</div>`);

define('desk-top', `
:host{display:grid;grid-template-columns:1fr 1fr;grid-template-rows:1fr auto;min-height:100vh}
`, `<excel-window></excel-window><filezilla-window></filezilla-window><task-bar main></task-bar><task-bar style="border-left:1px solid #555"></task-bar>`);

customElements.define('ui-icon', UiIcon);
</script>
</body>
</html>
